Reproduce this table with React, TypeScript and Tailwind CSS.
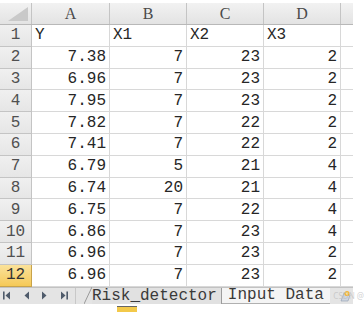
import React from 'react';

const rows: string[][] = [
  ['Y', 'X1', 'X2', 'X3'],
  ['7.38', '7', '23', '2'],
  ['6.96', '7', '23', '2'],
  ['7.95', '7', '23', '2'],
  ['7.82', '7', '22', '2'],
  ['7.41', '7', '22', '2'],
  ['6.79', '5', '21', '4'],
  ['6.74', '20', '21', '4'],
  ['6.75', '7', '22', '4'],
  ['6.86', '7', '23', '4'],
  ['6.96', '7', '23', '2'],
  ['6.96', '7', '23', '2'],
];

const cols = [
  { label: 'A', w: 'w-[78px]' },
  { label: 'B', w: 'w-[77px]' },
  { label: 'C', w: 'w-[77px]' },
  { label: 'D', w: 'w-[77px]' },
];

const mono = { fontFamily: '"Liberation Mono", monospace' };
const serif = { fontFamily: '"Liberation Serif", serif' };

function NavArrow({ dir, bar }: { dir: 'l' | 'r'; bar?: boolean }) {
  return (
    <svg width="8" height="9" viewBox="0 0 8 9" className="text-[#4f5b6b]">
      {dir === 'l' ? (
        <>
          {bar && <rect x="0" y="0.5" width="1.6" height="8" fill="currentColor" />}
          <path d="M7 0.5 L2.5 4.5 L7 8.5 Z" fill="currentColor" />
        </>
      ) : (
        <>
          <path d="M1 0.5 L5.5 4.5 L1 8.5 Z" fill="currentColor" />
          {bar && <rect x="6.4" y="0.5" width="1.6" height="8" fill="currentColor" />}
        </>
      )}
    </svg>
  );
}

export default function App() {
  return (
    <div className="w-[364px] h-[312px] bg-white pt-[3px] overflow-hidden relative">
      <div className="w-[353px]">
        {/* Column header */}
        <div className="flex h-[22px] bg-gradient-to-b from-[#f2f2f2] to-[#e3e3e3] border-b border-[#b8b8b8]">
          <div className="w-[32px] border-r border-[#c4c4c4] relative">
            <svg width="20" height="14" viewBox="0 0 20 14" className="absolute right-[3px] bottom-[3px]">
              <path d="M20 0 L20 14 L0 14 Z" fill="#c9c9c9" />
            </svg>
          </div>
          {cols.map((c) => (
            <div
              key={c.label}
              className={`${c.w} border-r border-[#c4c4c4] flex items-center justify-center text-[16px] text-[#4a4a4a]`}
              style={serif}
            >
              {c.label}
            </div>
          ))}
          <div className="flex-1" />
        </div>

        {/* Rows */}
        {rows.map((r, i) => {
          const selected = i === rows.length - 1;
          return (
            <div key={i} className="flex h-[21.8px]">
              <div
                className={`w-[32px] border-r border-b flex items-center justify-center text-[16px] ${
                  selected
                    ? 'bg-gradient-to-b from-[#fbe29a] to-[#f5c956] border-[#c8a34a] text-[#333]'
                    : 'bg-gradient-to-b from-[#f0f0f0] to-[#e6e6e6] border-[#c4c4c4] text-[#505050]'
                }`}
                style={mono}
              >
                {i + 1}
              </div>
              {r.map((v, j) => (
                <div
                  key={j}
                  className={`${cols[j].w} border-r border-b border-[#d8d8d8] flex items-center text-[16px] text-[#262626] px-[3px] ${
                    i === 0 ? 'justify-start' : 'justify-end'
                  }`}
                  style={mono}
                >
                  {v}
                </div>
              ))}
              <div className="flex-1 border-b border-[#d8d8d8]" />
            </div>
          );
        })}

        {/* Sheet tabs */}
        <div className="flex items-center h-[17px] bg-[#e4e4e4] border-t border-[#c2c2c2]">
          <div className="flex items-center w-[76px] pl-[3px] gap-[11px] border-r border-[#c8c8c8] h-full">
            <NavArrow dir="l" bar />
            <NavArrow dir="l" />
            <NavArrow dir="r" />
            <NavArrow dir="r" bar />
          </div>
          <div className="flex items-end h-full pl-[8px]">
            <svg width="8" height="17" viewBox="0 0 8 17" className="shrink-0">
              <path d="M0 17 L8 0" stroke="#9a9a9a" strokeWidth="1" />
            </svg>
            <div
              className="h-full flex items-center pr-[4px] text-[16px] text-[#3a3a3a] bg-[#e1e1e1] border-r border-[#9c9c9c]"
              style={mono}
            >
              Risk_detector
            </div>
            <div
              className="h-full flex items-center pl-[6px] pr-[6px] text-[16px] text-[#3a3a3a] bg-[#f4f4f4] border-b border-[#b0b0b0]"
              style={mono}
            >
              Input Data
            </div>
          </div>
          <svg width="12" height="12" viewBox="0 0 12 12" className="ml-[10px] shrink-0">
            <path d="M1 11 L4 3 L10 5 L8 11 Z" fill="#cfd6e0" stroke="#8f9bb0" strokeWidth="0.6" />
            <circle cx="7" cy="3.5" r="2.6" fill="#f3b43a" />
            <circle cx="7" cy="3.5" r="1.2" fill="#fde68a" />
          </svg>
        </div>
        <div className="flex h-[8px]">
          <div className="ml-[117px] mt-[2px] w-[20px] h-[6px] bg-[#f3c94a] border-t border-[#666]" />
        </div>
      </div>
      <div
        className="absolute right-0 top-[291px] text-[8px] leading-[10px] text-[#bdbdbd]/70"
        style={{ fontFamily: '"Noto Sans", sans-serif' }}
      >
        CSDN @
      </div>
    </div>
  );
}
